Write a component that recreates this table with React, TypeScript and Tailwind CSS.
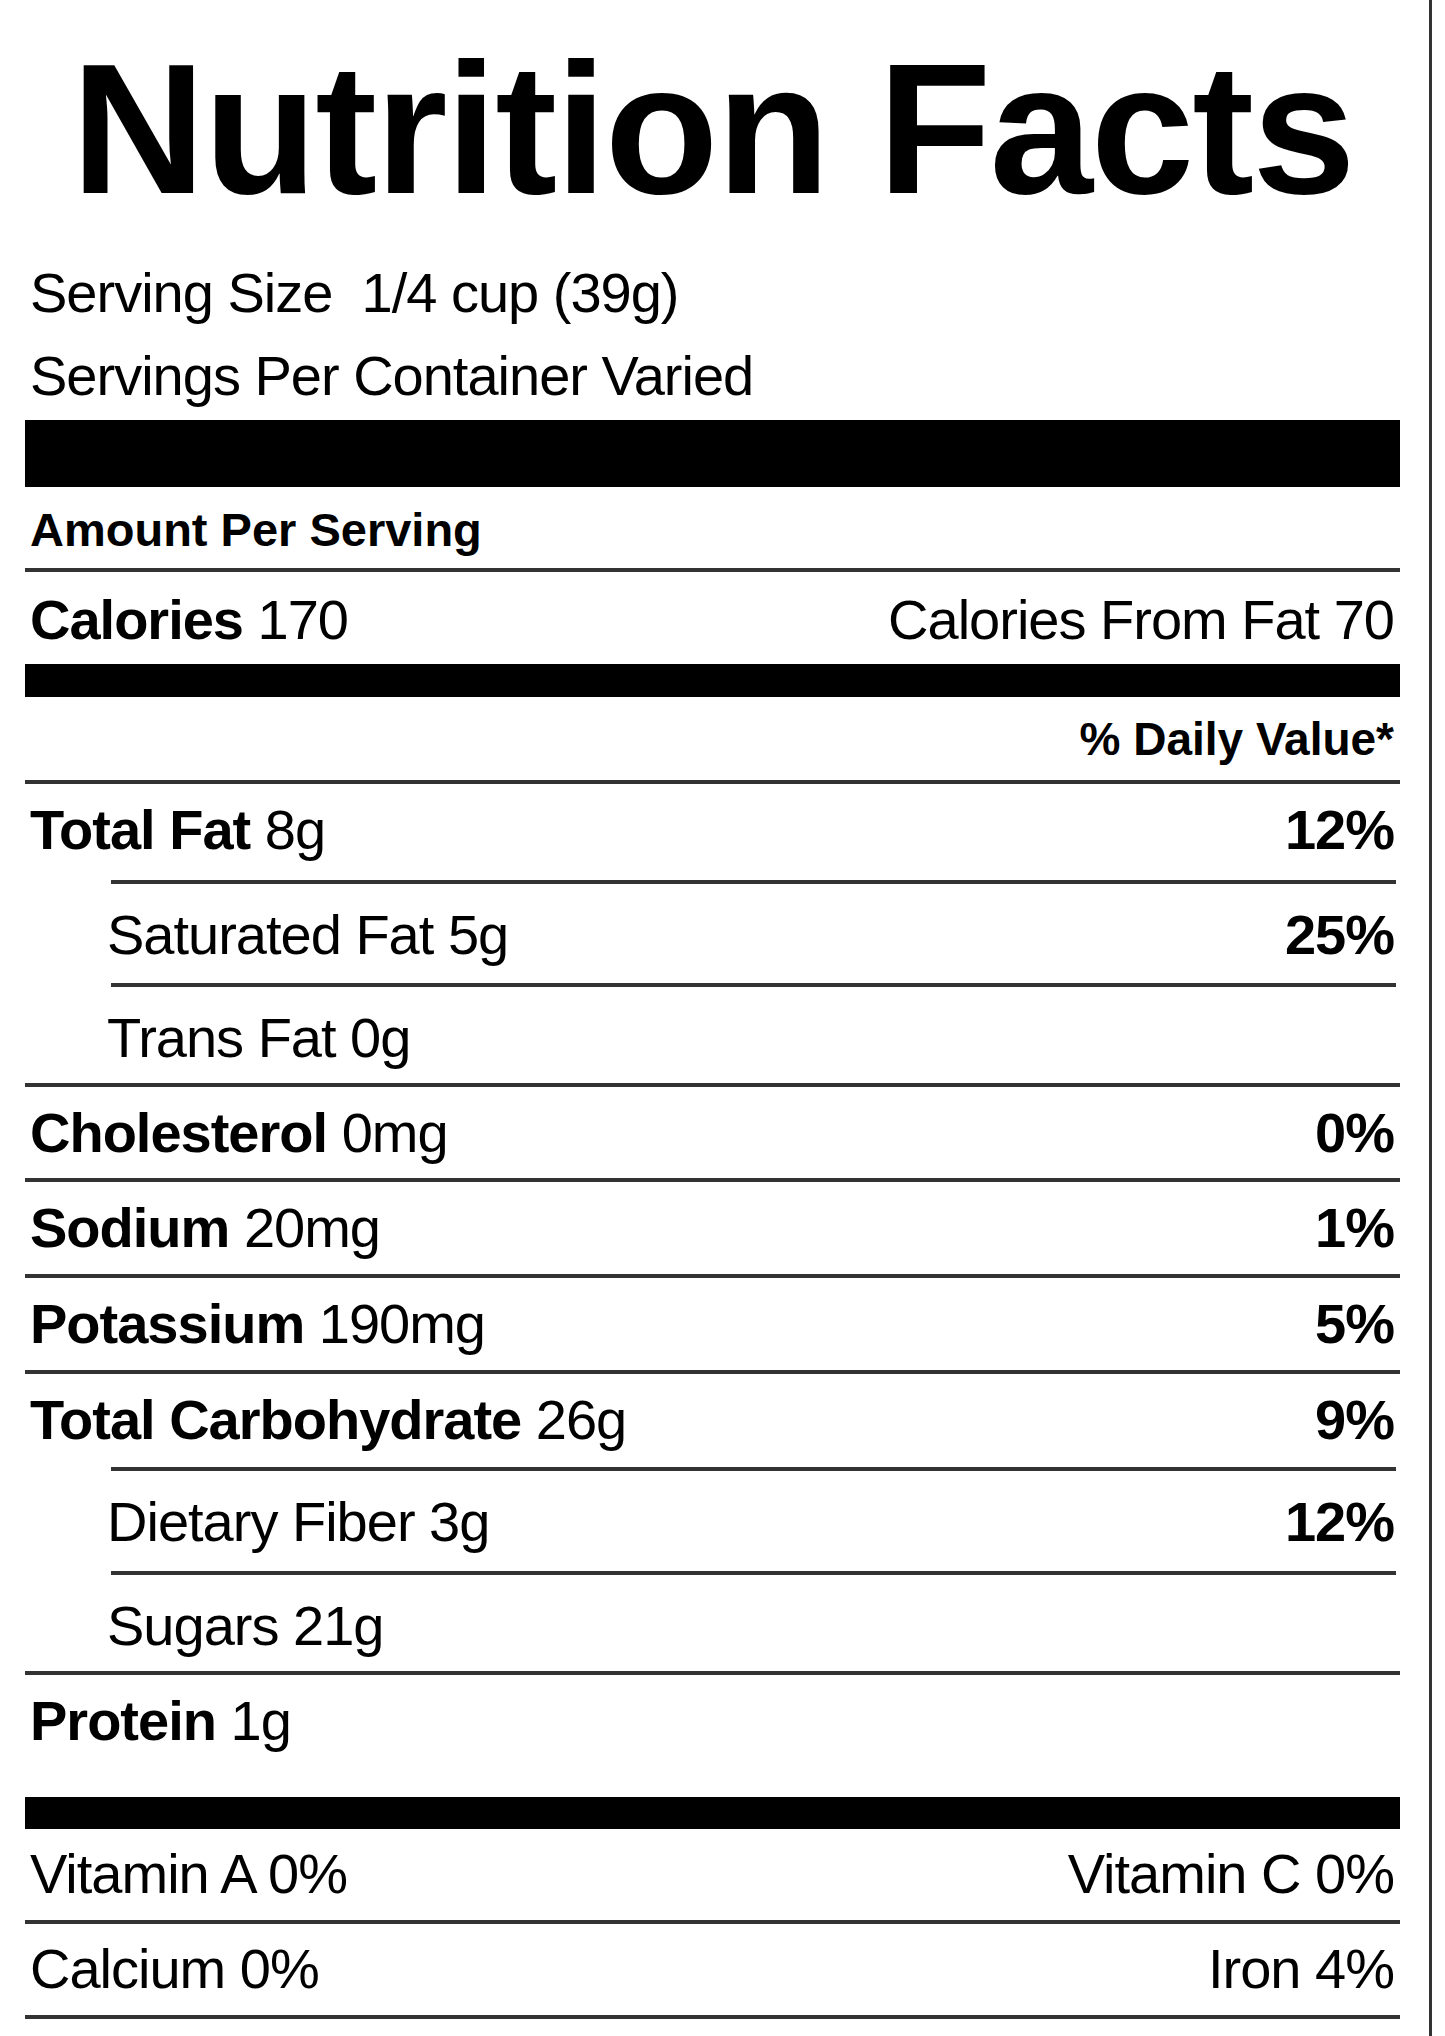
const font = { fontFamily: '"Liberation Sans", Arial, Helvetica, sans-serif' }

type Nutrient = {
  name: string
  amount: string
  dv?: string
  sub?: boolean
  h: string
}

const nutrients: Nutrient[] = [
  { name: 'Total Fat', amount: '8g', dv: '12%', h: 'h-[96px]' },
  { name: 'Saturated Fat', amount: '5g', dv: '25%', sub: true, h: 'h-[99px]' },
  { name: 'Trans Fat', amount: '0g', sub: true, h: 'h-[96px]' },
  { name: 'Cholesterol', amount: '0mg', dv: '0%', h: 'h-[91px]' },
  { name: 'Sodium', amount: '20mg', dv: '1%', h: 'h-[92px]' },
  { name: 'Potassium', amount: '190mg', dv: '5%', h: 'h-[92px]' },
  { name: 'Total Carbohydrate', amount: '26g', dv: '9%', h: 'h-[93px]' },
  { name: 'Dietary Fiber', amount: '3g', dv: '12%', sub: true, h: 'h-[100px]' },
  { name: 'Sugars', amount: '21g', sub: true, h: 'h-[96px]' },
  { name: 'Protein', amount: '1g', h: 'h-[122px]' },
]

function Rule({ sub }: { sub?: boolean }) {
  return <div className={sub ? 'h-[4px] bg-[#333] ml-[86px] mr-[4px]' : 'h-[4px] bg-[#333]'} />
}

function NutrientRow({ n, next }: { n: Nutrient; next?: Nutrient }) {
  return (
    <>
      <div
        className={`${n.h} flex justify-between text-[56px] leading-none tracking-[-1px] text-black pr-[6px] ${
          n.sub ? 'pl-[82px] pt-[23px]' : 'pl-[5px] pt-[18px]'
        }`}
      >
        <span>
          {n.sub ? n.name : <span className="font-bold">{n.name}</span>} {n.amount}
        </span>
        {n.dv && <span className="font-bold">{n.dv}</span>}
      </div>
      {next && <Rule sub={next.sub} />}
    </>
  )
}

export default function App() {
  return (
    <div className="bg-white h-[2036px] w-[1432px] border-r-[3px] border-[#333] pl-[25px] pr-[29px]" style={font}>
      <h1 className="pt-[36px] text-center text-[186px] leading-none font-bold tracking-[-2px] text-black">
        Nutrition Facts
      </h1>

      <div className="mt-[29px] px-[5px] text-[56px] leading-[83px] tracking-[-1px] text-black">
        <p>Serving Size&nbsp; 1/4 cup (39g)</p>
        <p>Servings Per Container Varied</p>
      </div>

      <div className="mt-[3px] h-[67px] bg-black" />

      <div className="h-[81px] pt-[19px] pl-[5px] text-[47px] leading-none font-bold text-black">
        Amount Per Serving
      </div>
      <Rule />

      <div className="h-[92px] pt-[20px] pl-[5px] pr-[6px] flex justify-between text-[56px] leading-none tracking-[-1px] text-black">
        <span>
          <span className="font-bold">Calories</span> 170
        </span>
        <span>Calories From Fat 70</span>
      </div>
      <div className="h-[33px] bg-black" />

      <div className="h-[83px] pt-[19px] pr-[6px] text-right text-[46px] leading-none font-bold text-black">
        % Daily Value*
      </div>
      <Rule />

      {nutrients.map((n, i) => (
        <NutrientRow key={n.name} n={n} next={nutrients[i + 1]} />
      ))}

      <div className="h-[32px] bg-black" />

      <div className="h-[91px] pt-[17px] pl-[5px] pr-[6px] flex justify-between text-[56px] leading-none tracking-[-1px] text-black">
        <span>Vitamin A 0%</span>
        <span>Vitamin C 0%</span>
      </div>
      <Rule />
      <div className="h-[91px] pt-[17px] pl-[5px] pr-[6px] flex justify-between text-[56px] leading-none tracking-[-1px] text-black">
        <span>Calcium 0%</span>
        <span>Iron 4%</span>
      </div>
      <Rule />
    </div>
  )
}
